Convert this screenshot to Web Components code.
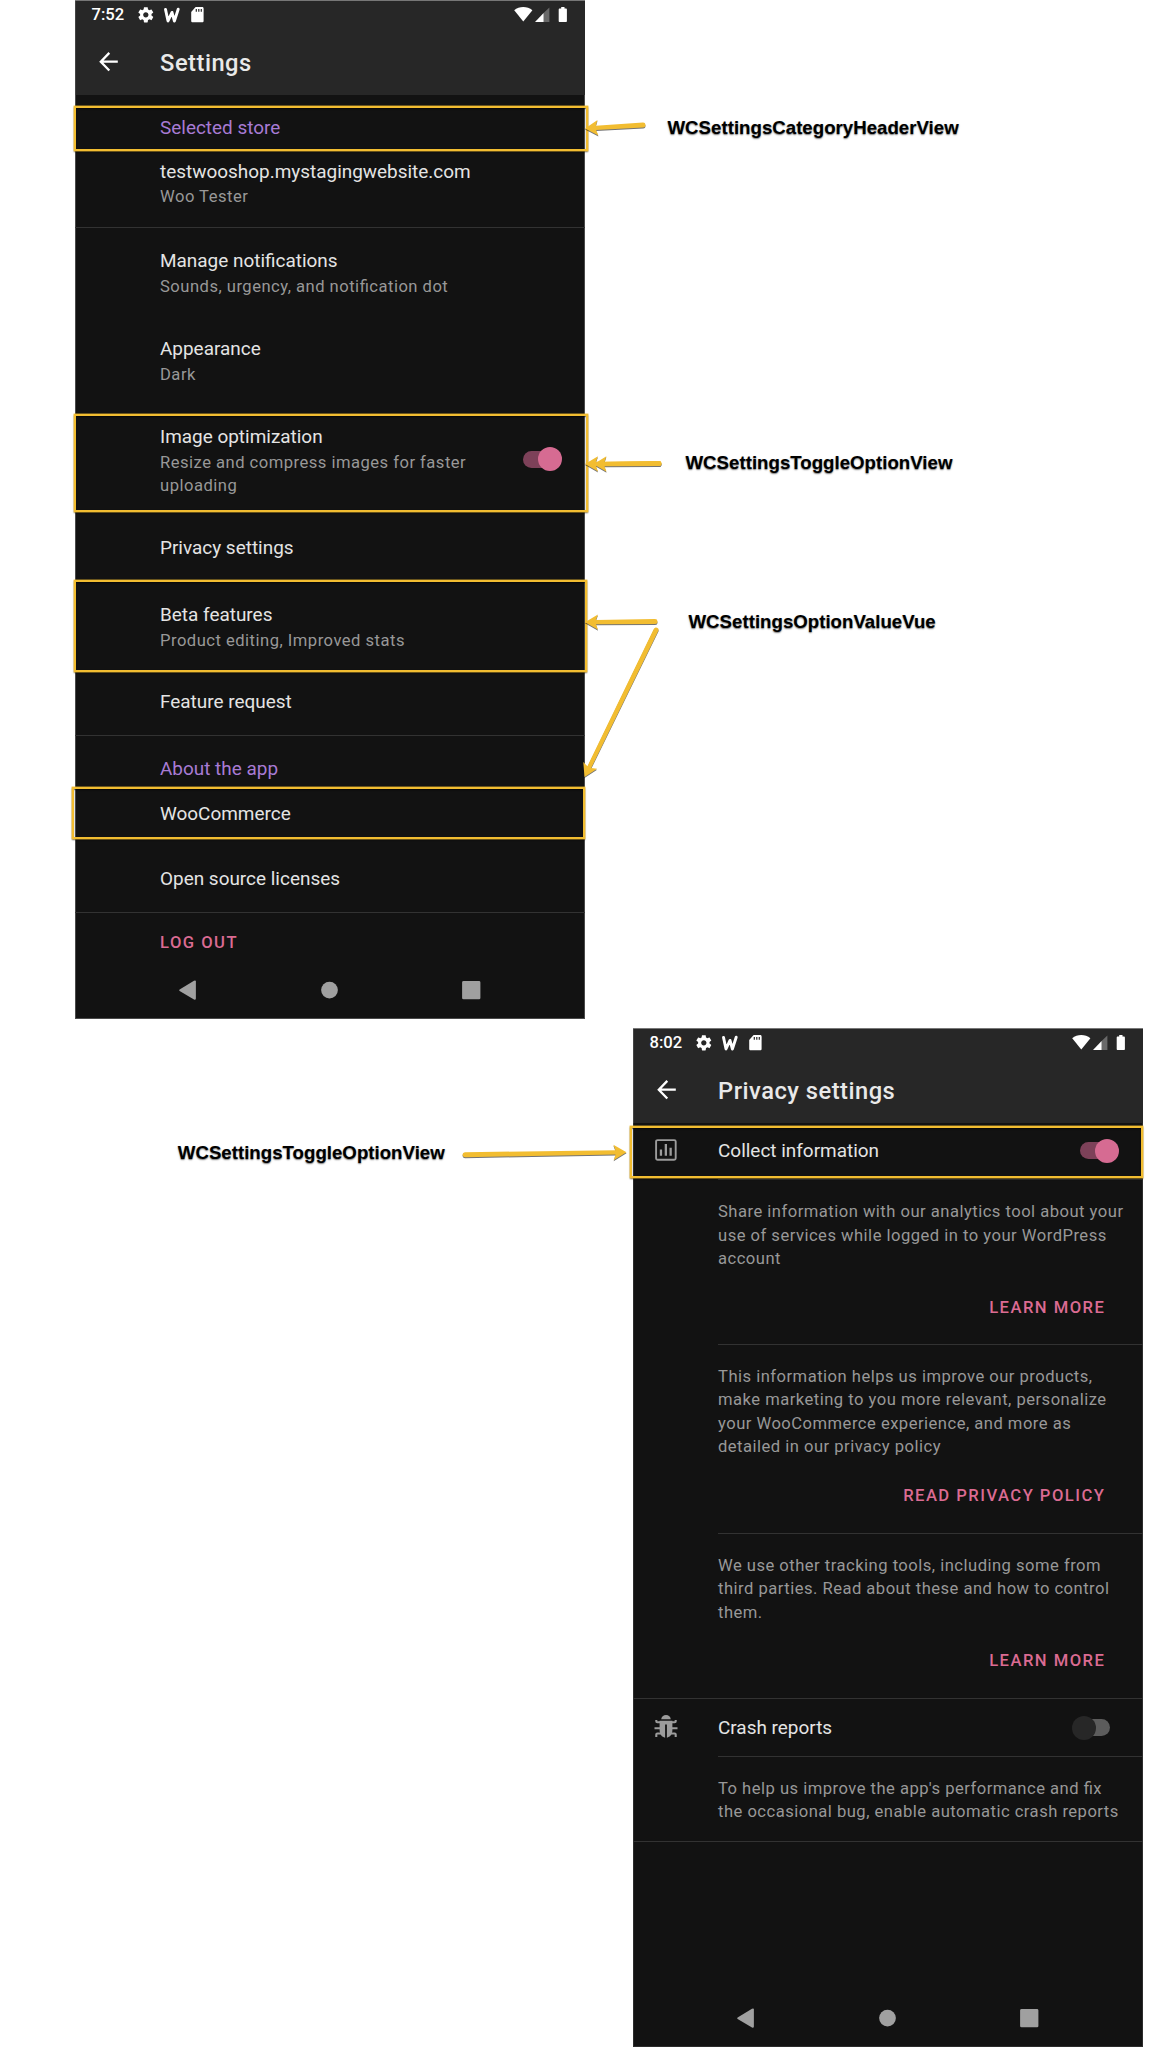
<!DOCTYPE html>
<html lang="en">
<head>
<meta charset="utf-8">
<title>Settings components</title>
<style>
html,body{margin:0;padding:0;background:#fff}
body{font-family:Roboto,"Liberation Sans",sans-serif;width:1164px;height:2047px;overflow:hidden}
</style>
</head>
<body>
<design-board></design-board>
<script>
const define = (name, html, setup) => customElements.define(name, class extends HTMLElement {
  constructor() {
    super();
    const t = document.createElement('template');
    t.innerHTML = html;
    this.attachShadow({mode: 'open'}).append(t.content.cloneNode(true));
  }
  connectedCallback() { if (setup) setup(this, this.shadowRoot); }
});

define('status-bar', `
<style>
:host{display:flex;align-items:center;height:30px;padding:0 17px 0 16.5px;color:#fff;box-sizing:border-box}
.time{font-size:16.6px;font-weight:500;line-height:30px;width:46.5px}
svg{display:block;flex:none}
.gap{flex:1}
</style>
<span class="time"><slot></slot></span>
<svg width="16" height="30" viewBox="0 0 16 30"><g transform="translate(-1.3,5.7) scale(.76)"><path fill="#fff" d="M19.43 12.98c.04-.32.07-.64.07-.98s-.03-.66-.07-.98l2.11-1.65c.19-.15.24-.42.12-.64l-2-3.46c-.12-.22-.39-.3-.61-.22l-2.49 1c-.52-.4-1.08-.73-1.69-.98l-.38-2.65C14.46 2.18 14.25 2 14 2h-4c-.25 0-.46.18-.49.42l-.38 2.65c-.61.25-1.17.59-1.69.98l-2.49-1c-.23-.09-.49 0-.61.22l-2 3.46c-.13.22-.07.49.12.64l2.11 1.65c-.04.32-.07.65-.07.98s.03.66.07.98l-2.11 1.65c-.19.15-.24.42-.12.64l2 3.46c.12.22.39.3.61.22l2.49-1c.52.4 1.08.73 1.69.98l.38 2.65c.03.24.24.42.49.42h4c.25 0 .46-.18.49-.42l.38-2.65c.61-.25 1.17-.59 1.69-.98l2.49 1c.23.09.49 0 .61-.22l2-3.46c.12-.22.07-.49-.12-.64l-2.11-1.65zM12 15.5c-1.93 0-3.5-1.57-3.5-3.5s1.57-3.5 3.5-3.5 3.5 1.57 3.5 3.5-1.57 3.5-3.5 3.5z"/></g></svg>
<svg width="18" height="30" viewBox="0 0 18 30" style="margin-left:9px"><path fill="none" stroke="#fff" stroke-width="2.9" stroke-linecap="round" stroke-linejoin="round" d="M2.5 9.4 5 21 9 12.4 11.4 21 15.2 9.2"/></svg>
<svg width="13" height="30" viewBox="0 0 13 30" style="margin-left:10px"><path fill="#fff" d="M4.6 7.1h6.6c.8 0 1.4.6 1.4 1.4v12.4c0 .8-.6 1.4-1.4 1.4H1.6c-.8 0-1.4-.6-1.4-1.4v-9z"/><path fill="#272727" d="M4.7 9h1.2v2.8H4.7zM7.2 9h1.2v2.8H7.2zM9.700 9h1.200v2.800H9.700z"/></svg>
<span class="gap"></span>
<svg width="54" height="30" viewBox="0 0 54 30"><path fill="#fff" d="M.2 10.200C5.200 5.900 13.200 5.900 18.400 10.200L9.300 21.400z"/><path fill="#696969" d="M35.400 7.400V22H29.600V13z"/><path fill="#fff" d="M21 22 29.600 13V22z"/><path fill="#fff" d="M47.200 7h3.300v1.500h1.300c.7 0 1.100.4 1.100 1.100v11.400c0 .7-.4 1.100-1.100 1.100h-6c-.7 0-1.100-.4-1.100-1.100V9.600c0-.7.4-1.100 1.100-1.100h1.400z"/></svg>`);

define('app-bar', `
<style>
:host{display:flex;align-items:flex-start;height:65px;padding-left:23.7px;box-sizing:border-box;color:#e9e9e9}
svg{display:block;flex:none;width:20px;height:65px;margin-right:41.4px}
.t{font-size:23.7px;font-weight:500;letter-spacing:.5px;line-height:67px}
</style>
<svg viewBox="0 0 20 65"><path d="M18.800 31.700H2M10.300 22.900 1.800 31.700 10.300 40.500" fill="none" stroke="#fff" stroke-width="2.300"/></svg>
<span class="t"><slot></slot></span>`);

define('nav-bar', `
<style>:host{display:block}svg{display:block}</style>
<svg width="510" height="28" viewBox="0 0 510 28" fill="#a0a0a0"><path d="M104.600 13.400 119 4.700Q120.900 3.900 120.900 5.600V22.600Q120.900 24.200 119 23.400L104.600 14.900Q103.600 14.100 104.600 13.400z"/><circle cx="254.500" cy="14.100" r="8.400"/><rect x="387.100" y="5" width="18.300" height="18.300" rx="1.400"/></svg>`);

define('toggle-switch', `
<style>
:host{display:flex;align-items:center;width:39px;height:24px;flex:none}
i{display:block;flex:none}
.track{width:31px;height:17px;border-radius:9px;background:#7d4159}
.thumb{width:24px;height:24px;border-radius:12px;background:#d66b92;margin-left:-16px}
:host([off]) .track{order:2;width:29px;background:#5c5c5c;margin-left:-15px}
:host([off]) .thumb{order:1;margin-left:0;background:#272727;z-index:1}
</style><i class="track"></i><i class="thumb"></i>`);

define('divider-line', `
<style>:host{display:block;height:1px;background:#323232;flex:none}:host([inset]){margin-left:85px}</style>`);

define('category-header', `
<style>:host{display:block;box-sizing:border-box;padding-left:85px;color:#a87bd4;font-size:18.950px;line-height:24px}</style><slot></slot>`);

define('option-row', `
<style>
:host{display:flex;box-sizing:border-box;padding-right:20px}
.lead{width:85px;flex:none}
.text{flex:1;min-width:0}
.title{display:block;font-size:18.950px;line-height:24px;color:#e4e4e4;white-space:nowrap}
.value{display:block;font-size:16.600px;letter-spacing:.48px;font-feature-settings:"liga" 1;line-height:23.650px;color:#989898;margin-top:1.700px;white-space:nowrap}
</style>
<span class="lead"><slot name="lead"></slot></span>
<span class="text"><span class="title"><slot></slot></span><span class="value"><slot name="value"></slot></span></span>
<slot name="end"></slot>`);

define('info-text', `
<style>:host{display:block;box-sizing:border-box;padding-left:85px;font-size:16.600px;letter-spacing:.48px;font-feature-settings:"liga" 1;line-height:23.650px;color:#989898;white-space:nowrap}</style><slot></slot>`);

define('text-button', `
<style>:host{display:block;box-sizing:border-box;font-size:16.600px;font-weight:500;letter-spacing:1.470px;line-height:24px;color:#db6b92;white-space:nowrap}</style><slot></slot>`);

define('phone-frame', `
<style>
:host{display:flex;flex-direction:column;box-sizing:border-box;width:510px;height:1019px;background:#121212;box-shadow:inset 0 0 0 1px var(--edge,#4a4a4a)}
header{display:block;height:95px;background:#272727;box-shadow:inset 0 1px 0 #777,inset 1px 0 0 #444}
main{display:flex;flex-direction:column;height:881px}
</style>
<header><slot name="bar"></slot></header><main><slot></slot></main><slot name="nav"></slot>`);

define('annotation-label', `
<style>:host{position:absolute;font:bold 18.680px/24px "Liberation Sans",Arial,sans-serif;color:#000;white-space:nowrap;text-shadow:0 1px 1.500px rgba(0,0,0,.55)}</style><slot></slot>`);

define('highlight-box', `
<style>:host{position:absolute;box-sizing:border-box;border:2px solid #f2bd31;box-shadow:0 0 0 .4px #f2bd31,0 1px 1.500px rgba(0,0,0,.6),inset 0 1px 1.500px rgba(0,0,0,.6)}</style>`);

define('annotation-arrows', `
<style>:host{position:absolute;left:0;top:0;pointer-events:none}svg{display:block;filter:drop-shadow(.5px 1.200px .6px rgba(0,0,0,.55))}</style>
<svg width="1164" height="1300" viewBox="0 0 1164 1300" fill="#f2bd31"></svg>`, (el, root) => {
  const svg = root.querySelector('svg');
  const arrows = [[643,125,585,128.500],[659,463.500,585,463.900],[659,463.500,593.500,464.200],[655,621.600,585,622.200],[656,630,584.500,777],[465,1154.700,626.500,1152.300]];
  for (const [x1, y1, x2, y2] of arrows) {
    const len = Math.hypot(x2 - x1, y2 - y1), a = Math.atan2(y2 - y1, x2 - x1) * 180 / Math.PI;
    const p = document.createElementNS('http://www.w3.org/2000/svg', 'path');
    p.setAttribute('transform', `translate(${x1} ${y1}) rotate(${a})`);
    p.setAttribute('d', `M0 -2.500A2.500 2.500 0 0 0 0 2.500L${len-11} 2.100L${len-13} 7.700L${len} 0L${len-13} -7.700L${len-11} -2.100z`);
    svg.append(p);
  }
});

const barIcon = `<svg slot="lead" width="22" height="22" viewBox="0 0 22 22" style="display:block;margin-left:22.200px"><rect x="1.100" y="1.100" width="19.600" height="19.600" rx="1.500" fill="none" stroke="#9c9c9c" stroke-width="1.900"/><path fill="#9c9c9c" d="M4.800 10.500h2.300v6.300H4.800zM9.700 5h2.300v11.800H9.700zM14.500 8.800h2.300v8h-2.300z"/></svg>`;
const bugIcon = `<svg slot="lead" width="24" height="24" viewBox="0 0 24 24" style="display:block;margin-left:21.200px;margin-top:-2px" fill="#9c9c9c"><path d="M7.200 5.200C7.400 2.600 9.400.9 12 .9s4.600 1.700 4.800 4.300z"/><path d="M5.600 6.800h12.800v9c0 4.600-2.400 7.400-5.500 7.900V10.400h-1.800v13.300c-3.100-.5-5.500-3.300-5.500-7.900z"/><path fill="none" stroke="#9c9c9c" stroke-width="2.100" d="M2.300 6v1.200c0 .7.300 1 1 1H6M21.700 6v1.200c0 .7-.3 1-1 1H18M.5 14.200H6M23.500 14.200H18M2.300 23v-2.500c0-.7.300-1 1-1H7M21.700 23v-2.500c0-.7-.3-1-1-1H17"/></svg>`;

define('design-board', `
<style>
:host{display:flex;flex-direction:column;position:relative;width:1164px;height:2047px;background:#fff}
.one{margin-left:75px}
.two{margin:9px 0 0 633px;--edge:#2c2c2c}
</style>
<phone-frame class="one">
  <status-bar slot="bar">7:52</status-bar><app-bar slot="bar">Settings</app-bar>
  <category-header style="height:56px;padding-top:21px">Selected store</category-header>
  <option-row style="height:76px;padding-top:8.800px">testwooshop.mystagingwebsite.com<span slot="value">Woo Tester</span></option-row>
  <divider-line></divider-line>
  <option-row style="height:87.700px;padding-top:21.200px">Manage notifications<span slot="value">Sounds, urgency, and notification dot</span></option-row>
  <option-row style="height:88px;padding-top:21.200px">Appearance<span slot="value">Dark</span></option-row>
  <option-row style="height:110.700px;padding-top:21.200px">Image optimization<span slot="value">Resize and compress images for faster<br>uploading</span><toggle-switch slot="end" style="margin-top:22.400px;margin-right:3.500px"></toggle-switch></option-row>
  <option-row style="height:67.300px;padding-top:21.200px">Privacy settings</option-row>
  <option-row style="height:88px;padding-top:21.200px">Beta features<span slot="value">Product editing, Improved stats</span></option-row>
  <option-row style="height:65.300px;padding-top:20.500px">Feature request</option-row>
  <divider-line></divider-line>
  <category-header style="height:51px;padding-top:21.400px">About the app</category-header>
  <option-row style="height:59px;padding-top:15px">WooCommerce</option-row>
  <option-row style="height:66px;padding-top:21.200px">Open source licenses</option-row>
  <divider-line></divider-line>
  <text-button style="padding:18px 0 0 85px">LOG OUT</text-button>
  <nav-bar slot="nav"></nav-bar>
</phone-frame>
<phone-frame class="two">
  <status-bar slot="bar">8:02</status-bar><app-bar slot="bar">Privacy settings</app-bar>
  <option-row style="height:56px;padding-top:16.200px">${barIcon}Collect information<toggle-switch slot="end" style="margin-top:-.4px;margin-right:3.800px"></toggle-switch></option-row>
  <divider-line inset></divider-line>
  <info-text style="height:108px;padding-top:20px">Share information with our analytics tool about your<br>use of services while logged in to your WordPress<br>account</info-text>
  <text-button style="height:56px;padding:7.500px 37.700px 0 0;text-align:right">LEARN MORE</text-button>
  <divider-line inset></divider-line>
  <info-text style="height:131px;padding-top:19.500px">This information helps us improve our products,<br>make marketing to you more relevant, personalize<br>your WooCommerce experience, and more as<br>detailed in our privacy policy</info-text>
  <text-button style="height:57px;padding:8px 37.700px 0 0;text-align:right">READ PRIVACY POLICY</text-button>
  <divider-line inset></divider-line>
  <info-text style="height:108px;padding-top:19.500px">We use other tracking tools, including some from<br>third parties. Read about these and how to control<br>them.</info-text>
  <text-button style="height:56px;padding:7px 37.700px 0 0;text-align:right">LEARN MORE</text-button>
  <divider-line></divider-line>
  <option-row style="height:57px;padding-top:16.500px">${bugIcon}Crash reports<toggle-switch off slot="end" style="margin-top:0;margin-right:12.500px"></toggle-switch></option-row>
  <divider-line inset></divider-line>
  <info-text style="height:84px;padding-top:19.500px">To help us improve the app's performance and fix<br>the occasional bug, enable automatic crash reports</info-text>
  <divider-line></divider-line>
  <nav-bar slot="nav"></nav-bar>
</phone-frame>
<highlight-box style="left:73.500px;top:106px;width:514px;height:45px"></highlight-box>
<highlight-box style="left:73.500px;top:414px;width:514px;height:98px"></highlight-box>
<highlight-box style="left:73.500px;top:580px;width:513px;height:92px"></highlight-box>
<highlight-box style="left:72px;top:787px;width:513px;height:52px"></highlight-box>
<highlight-box style="left:630px;top:1126px;width:513px;height:52px"></highlight-box>
<annotation-label style="left:667.500px;top:115.600px">WCSettingsCategoryHeaderView</annotation-label>
<annotation-label style="left:685.500px;top:451.300px">WCSettingsToggleOptionView</annotation-label>
<annotation-label style="left:688.500px;top:610.300px">WCSettingsOptionValueVue</annotation-label>
<annotation-label style="left:177.800px;top:1140.500px">WCSettingsToggleOptionView</annotation-label>
<annotation-arrows></annotation-arrows>`);
</script>
</body>
</html>
